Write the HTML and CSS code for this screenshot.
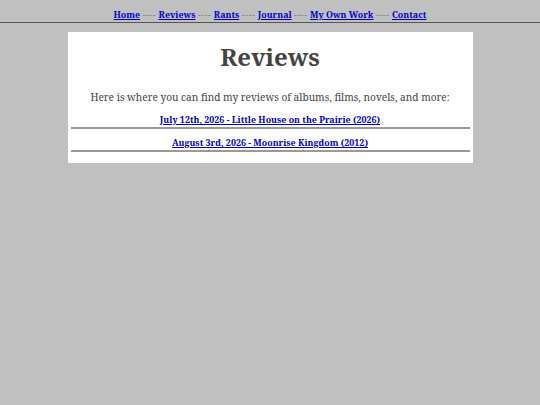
FILE: index.html
```html
<!DOCTYPE html>
<html>
<head>
<meta charset="utf-8">
<link rel="stylesheet" href="styles.css">
</head>
<body>
<nav class="nav">
<a href="#">Home</a> <span class="sep">----</span> <a href="#">Reviews</a> <span class="sep">----</span> <a href="#">Rants</a> <span class="sep">----</span> <a href="#">Journal</a> <span class="sep">----</span> <a href="#">My Own Work</a> <span class="sep">----</span> <a href="#">Contact</a>
</nav>
<main class="page">
<h1 class="title">Reviews</h1>
<p class="intro">Here is where you can find my reviews of albums, films, novels, and more:</p>
<div class="entry"><a href="#">July 12th, 2026 - Little House on the Prairie (2026)</a></div>
<div class="entry"><a href="#">August 3rd, 2026 - Moonrise Kingdom (2012)</a></div>
</main>
</body>
</html>
```
FILE: styles.css
```css
html, body {
  margin: 0;
  padding: 0;
}
body {
  background: #c0c0c0;
  font-family: "Noto Serif", "DejaVu Serif", serif;
  color: #444;
}
.nav {
  text-align: center;
  font-size: 8.9px;
  font-weight: bold;
  line-height: 11px;
  padding: 9px 0 2px;
  border-bottom: 1px solid #555;
}
.nav a {
  color: #0000cc;
}
.sep {
  font-weight: normal;
  color: #777;
  letter-spacing: 0.7px;
}
.page {
  width: 405px;
  margin: 9px auto 0;
  background: #fff;
  padding: 10px 3px 11px;
  box-sizing: border-box;
  text-align: center;
}
.title {
  margin: 0;
  font-size: 24px;
  line-height: 30px;
  color: #444;
}
.intro {
  font-size: 10.15px;
  line-height: 14px;
  margin: 18px 0 10px;
}
.entry {
  font-size: 8.9px;
  font-weight: bold;
  line-height: 12px;
  padding-bottom: 1px;
  border-bottom: 2px solid #999;
}
.entry + .entry {
  margin-top: 8px;
}
.entry a {
  color: #0000cc;
}
```
